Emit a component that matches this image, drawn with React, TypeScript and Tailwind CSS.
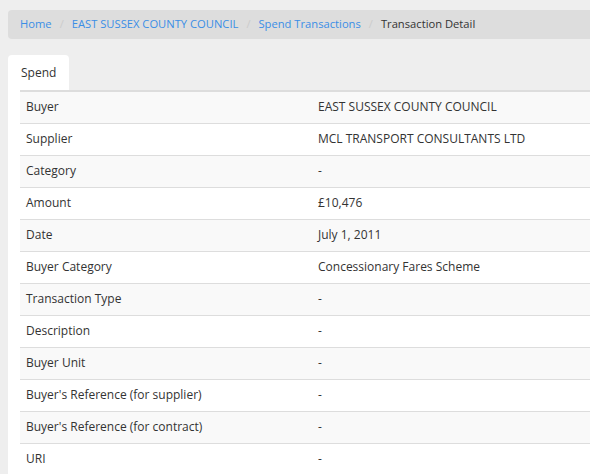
export default function App() {
  const rows = [
    ["Buyer", "EAST SUSSEX COUNTY COUNCIL"],
    ["Supplier", "MCL TRANSPORT CONSULTANTS LTD"],
    ["Category", "-"],
    ["Amount", "£10,476"],
    ["Date", "July 1, 2011"],
    ["Buyer Category", "Concessionary Fares Scheme"],
    ["Transaction Type", "-"],
    ["Description", "-"],
    ["Buyer Unit", "-"],
    ["Buyer's Reference (for supplier)", "-"],
    ["Buyer's Reference (for contract)", "-"],
    ["URI", "-"],
  ];

  return (
    <div className="min-h-screen w-[590px] overflow-hidden bg-[#eeeeee] pt-[10px] pl-2 text-[12px] text-[#333333] font-['Open_Sans',sans-serif]">
      {/* Breadcrumb */}
      <div className="flex h-[29px] w-[600px] items-center rounded-l-[4px] bg-[#dddddd] pl-3 text-[11.2px]">
        <a className="text-[#3a8ee6]">Home</a>
        <span className="px-[8px] text-[#cccccc]">/</span>
        <a className="text-[#3a8ee6]">EAST SUSSEX COUNTY COUNCIL</a>
        <span className="px-[8px] text-[#cccccc]">/</span>
        <a className="text-[#3a8ee6]">Spend Transactions</a>
        <span className="px-[8px] text-[#cccccc]">/</span>
        <span className="text-[#333333]">Transaction Detail</span>
      </div>

      {/* Tabs */}
      <div className="mt-[16px] flex">
        <div className="flex h-[35px] w-[61px] items-center rounded-t-[4px] bg-white pl-[13px] text-[#333333]">
          Spend
        </div>
      </div>

      {/* Tab content */}
      <div className="w-[600px] bg-white pl-3">
        <table className="w-full border-collapse border-t-2 border-[#dddddd]">
          <tbody>
            {rows.map((r, i) => (
              <tr key={i} className={i % 2 === 0 ? "bg-[#f9f9f9]" : "bg-white"}>
                <td className={"h-[32px] w-[292px] px-[6px] align-middle " + (i > 0 ? "border-t border-[#dddddd]" : "")}>{r[0]}</td>
                <td className={"h-[32px] px-[6px] align-middle " + (i > 0 ? "border-t border-[#dddddd]" : "")}>{r[1]}</td>
              </tr>
            ))}
          </tbody>
        </table>
      </div>
    </div>
  );
}
